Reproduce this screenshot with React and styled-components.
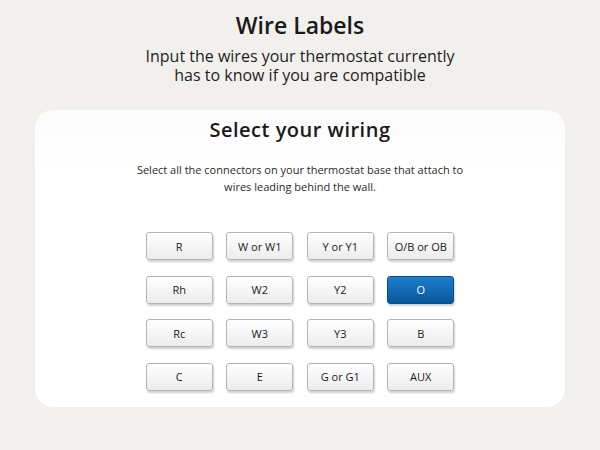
import React from "react";
import styled, { createGlobalStyle } from "styled-components";

const Global = createGlobalStyle`
  html, body { margin: 0; padding: 0; background: #f1f0ec; }
  body { font-family: "Open Sans", "Liberation Sans", sans-serif; }
`;

const Page = styled.div`
  width: 600px;
  height: 450px;
  box-sizing: border-box;
  padding: 8px 35px 0;
  display: flex;
  flex-direction: column;
  align-items: center;
`;

const Title = styled.h1`
  margin: 0;
  font-size: 23px;
  line-height: 34px;
  font-weight: 600;
  color: #1a1a1a;
`;

const Subtitle = styled.p`
  margin: 5px 0 0;
  font-size: 16px;
  line-height: 19px;
  text-align: center;
  color: #1e1e1e;
`;

const Card = styled.div`
  margin-top: 25px;
  width: 530px;
  height: 297px;
  box-sizing: border-box;
  background: linear-gradient(#fbfbfb, #ffffff 60px);
  border-radius: 18px;
  display: flex;
  flex-direction: column;
  align-items: center;
  padding-top: 6px;
`;

const CardTitle = styled.h2`
  margin: 0;
  font-size: 20px;
  line-height: 28px;
  letter-spacing: 0.5px;
  font-weight: 600;
  color: #1a1a1a;
`;

const Desc = styled.p`
  margin: 17px 0 0;
  font-size: 11px;
  line-height: 17px;
  text-align: center;
  color: #2a2a2a;
`;

const Grid = styled.div`
  margin-top: 37px;
  display: grid;
  grid-template-columns: repeat(4, 67px);
  grid-auto-rows: 28px;
  column-gap: 13.5px;
  row-gap: 15.5px;
`;

const WireButton = styled.button`
  font-family: inherit;
  font-size: 11px;
  padding: 0;
  border-radius: 3px;
  cursor: pointer;
  border: 1px solid ${(p) => (p.$active ? "#0a4f8c" : "#b5b5b5")};
  background: ${(p) =>
    p.$active
      ? "linear-gradient(#1b7fce, #0a5799)"
      : "linear-gradient(#ffffff, #ececec)"};
  color: ${(p) => (p.$active ? "#ffffff" : "#1a1a1a")};
  box-shadow: 1px 2px 2px rgba(0, 0, 0, 0.18);
`;

const wires = [
  "R", "W or W1", "Y or Y1", "O/B or OB",
  "Rh", "W2", "Y2", "O",
  "Rc", "W3", "Y3", "B",
  "C", "E", "G or G1", "AUX",
];

export default function App() {
  return (
    <Page>
      <Global />
      <Title>Wire Labels</Title>
      <Subtitle>
        Input the wires your thermostat currently
        <br />
        has to know if you are compatible
      </Subtitle>
      <Card>
        <CardTitle>Select your wiring</CardTitle>
        <Desc>
          Select all the connectors on your thermostat base that attach to
          <br />
          wires leading behind the wall.
        </Desc>
        <Grid>
          {wires.map((w) => (
            <WireButton key={w} $active={w === "O"}>
              {w}
            </WireButton>
          ))}
        </Grid>
      </Card>
    </Page>
  );
}
